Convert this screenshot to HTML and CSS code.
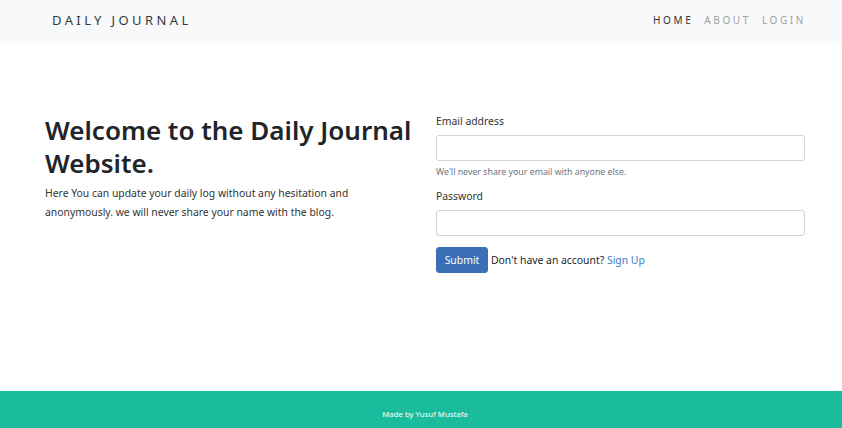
FILE: index.html
```html
<!DOCTYPE html>
<html lang="en">
<head>
<meta charset="utf-8">
<title>Daily Journal</title>
<link rel="stylesheet" href="styles.css">
</head>
<body>
<header class="navbar">
  <a class="brand" href="#">DAILY JOURNAL</a>
  <nav class="nav">
    <a class="nav-link active" href="#">HOME</a>
    <a class="nav-link" href="#">ABOUT</a>
    <a class="nav-link" href="#">LOGIN</a>
  </nav>
</header>
<main class="content">
  <section class="intro">
    <h1 class="title">Welcome to the Daily Journal Website.</h1>
    <p class="lead">Here You can update your daily log without any hesitation and anonymously. we will never share your name with the blog.</p>
  </section>
  <form class="login">
    <div class="group">
      <label class="label" for="email">Email address</label>
      <input class="input" id="email" type="email">
      <small class="hint">We'll never share your email with anyone else.</small>
    </div>
    <div class="group">
      <label class="label" for="pw">Password</label>
      <input class="input" id="pw" type="password">
    </div>
    <div class="actions">
      <button class="btn" type="button">Submit</button>
      <span class="signup">Don't have an account? <a href="#">Sign Up</a></span>
    </div>
  </form>
</main>
<footer class="footer">Made by Yusuf Mustafa</footer>
</body>
</html>
```
FILE: styles.css
```css
* { box-sizing: border-box; }
html, body { height: 100%; }
body {
  margin: 0;
  font-family: "Noto Sans", "Open Sans", sans-serif;
  color: #212529;
  background: #fff;
  display: flex;
  flex-direction: column;
}
.navbar {
  height: 44px;
  background: #f8f9fa;
  display: flex;
  align-items: center;
  justify-content: space-between;
  padding: 0 36px 4px 52px;
}
.brand {
  color: #343a40;
  text-decoration: none;
  font-size: 13px;
  letter-spacing: 3.4px;
}
.nav { display: flex; gap: 11px; }
.nav-link {
  color: #a0a0a0;
  text-decoration: none;
  font-size: 10px;
  letter-spacing: 2.6px;
}
.nav-link.active { color: #333; }
.content {
  flex: 1;
  display: grid;
  grid-template-columns: 372px 369px;
  column-gap: 19px;
  padding: 68px 0 0 45px;
  align-items: start;
}
.title {
  margin: 2px 0 4px;
  font-size: 26px;
  font-weight: 600;
  line-height: 33px;
  color: #212529;
}
.lead {
  margin: 0;
  font-size: 10.4px;
  line-height: 19px;
  color: #333;
}
.login { display: flex; flex-direction: column; }
.group { display: flex; flex-direction: column; }
.group + .group { margin-top: 8px; }
.label { font-size: 10.4px; line-height: 18px; margin-bottom: 5px; color: #333; }
.input {
  height: 26px;
  border: 1px solid #ced4da;
  border-radius: 3px;
  background: #fff;
}
.hint { font-size: 8.8px; line-height: 14px; color: #6c757d; margin-top: 4px; }
.actions { display: flex; align-items: center; gap: 3px; margin-top: 11px; }
.btn {
  height: 26px;
  width: 52px;
  padding: 0;
  background: #3c6eb6;
  border: 1px solid #3c6eb6;
  border-radius: 3px;
  color: #fff;
  font-family: inherit;
  font-size: 10.4px;
}
.signup { font-size: 10.4px; color: #212529; }
.signup a { color: #3d7cc9; text-decoration: none; }
.footer {
  height: 37px;
  background: #1abc9c;
  color: #fff;
  font-size: 7.8px;
  display: flex;
  align-items: center;
  justify-content: center;
  padding: 9px 0 0 8px;
}
```
